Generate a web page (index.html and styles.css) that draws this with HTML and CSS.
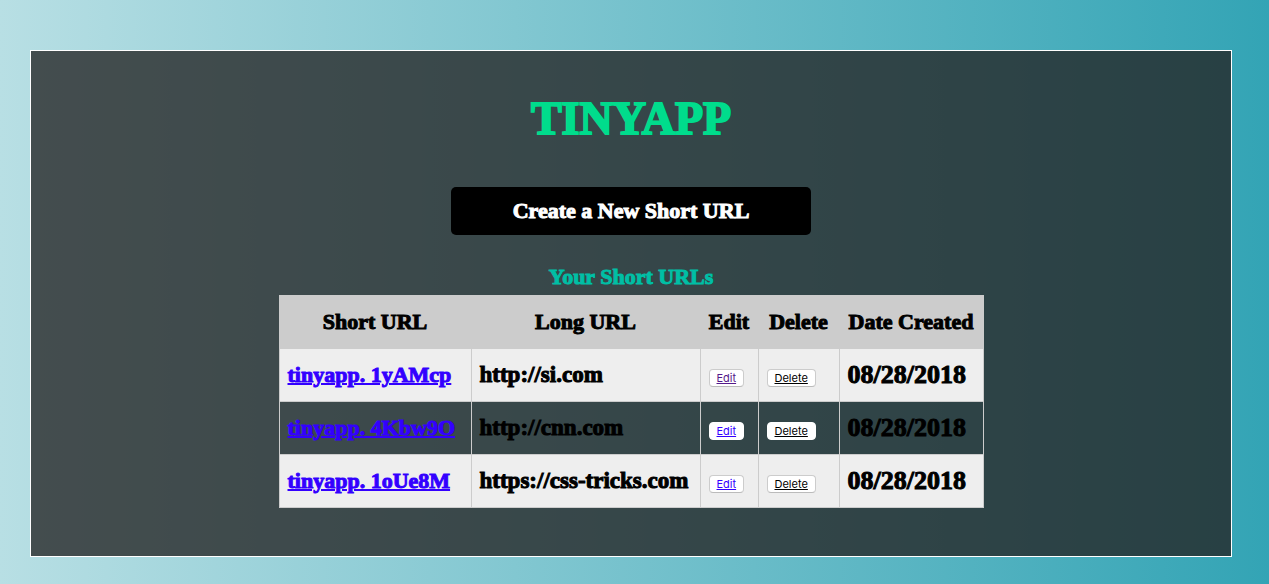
FILE: index.html
```html
<!DOCTYPE html>
<html lang="en">
<head>
  <meta charset="utf-8">
  <meta name="viewport" content="width=device-width, initial-scale=1">
  <title>TinyApp</title>
  <link rel="stylesheet" href="styles.css">
</head>
<body>
  <main class="panel">
    <h1 class="title">TINYAPP</h1>
    <a class="create" href="#new">Create a New Short URL</a>
    <table class="urls">
      <caption>Your Short URLs</caption>
      <colgroup>
        <col class="col-short">
        <col class="col-long">
        <col class="col-edit">
        <col class="col-delete">
        <col class="col-date">
      </colgroup>
      <thead>
        <tr>
          <th scope="col">Short URL</th>
          <th scope="col">Long URL</th>
          <th scope="col">Edit</th>
          <th scope="col">Delete</th>
          <th scope="col">Date Created</th>
        </tr>
      </thead>
      <tbody>
        <tr>
          <td><a class="short" href="#1yAMcp">tinyapp. 1yAMcp</a></td>
          <td class="long">http://si.com</td>
          <td><a class="action seen" href="#edit-1yAMcp">Edit</a></td>
          <td><button class="action delete" type="button">Delete</button></td>
          <td class="date">08/28/2018</td>
        </tr>
        <tr>
          <td><a class="short" href="#4Kbw9O">tinyapp. 4Kbw9O</a></td>
          <td class="long">http://cnn.com</td>
          <td><a class="action" href="#edit-4Kbw9O">Edit</a></td>
          <td><button class="action delete" type="button">Delete</button></td>
          <td class="date">08/28/2018</td>
        </tr>
        <tr>
          <td><a class="short" href="#1oUe8M">tinyapp. 1oUe8M</a></td>
          <td class="long">https://css-tricks.com</td>
          <td><a class="action" href="#edit-1oUe8M">Edit</a></td>
          <td><button class="action delete" type="button">Delete</button></td>
          <td class="date">08/28/2018</td>
        </tr>
      </tbody>
    </table>
  </main>
</body>
</html>
```
FILE: styles.css
```css
* {
  box-sizing: border-box;
}

html {
  min-height: 100%;
  background: linear-gradient(to right, #b8dfe4, #33a4b5);
}

body {
  margin: 0;
  padding: 50px 37px 27px 30px;
  font: bold 22px/36px "Liberation Serif", "Times New Roman", serif;
  color: #000;
}

.panel {
  display: flex;
  flex-direction: column;
  align-items: center;
  padding: 40px 0 48px;
  border: 1px solid #fff;
  background: rgba(36, 36, 36, 0.78);
}

.title {
  margin: 0 0 40px;
  font-size: 46px;
  line-height: 56px;
  color: #00dc8c;
  -webkit-text-stroke: 2px #00dc8c;
}

.create {
  width: 30%;
  min-width: 280px;
  padding: 6px 16px;
  border-radius: 5px;
  background: #000;
  color: #fff;
  text-align: center;
  text-decoration: none;
}

.urls {
  margin-top: 24px;
  border-collapse: collapse;
}

.urls caption {
  color: #00bfa5;
}

.create,
.urls caption,
.urls th,
.short,
.long,
.date {
  -webkit-text-stroke: 1px currentColor;
}

.col-short {
  width: 192px;
}

.col-long {
  width: 229px;
}

.col-edit {
  width: 58px;
}

.col-delete {
  width: 81px;
}

.col-date {
  width: 144px;
}

.urls th,
.urls td {
  padding: 8px;
  border: 1px solid #ccc;
  white-space: nowrap;
}

.urls th {
  background: #ccc;
}

.urls td {
  text-align: left;
}

.urls tbody tr:nth-child(odd) {
  background: #eee;
}

.urls .long {
  font-size: 23px;
}

.urls .date {
  font-size: 26px;
}

.short {
  color: #30f;
  text-decoration-thickness: 2px;
}

.action {
  display: inline-block;
  padding: 0 7px;
  border: 1px solid #ccc;
  border-bottom-color: #bbb;
  border-radius: 4px;
  background: #fff;
  font: 11px/16px Inter, "Liberation Sans", sans-serif;
  color: #30f;
  text-decoration: underline;
}

.urls tr:nth-child(even) .action {
  border-color: #fff;
}

.seen {
  color: #551a8b;
}

.delete {
  color: #000;
}
```
